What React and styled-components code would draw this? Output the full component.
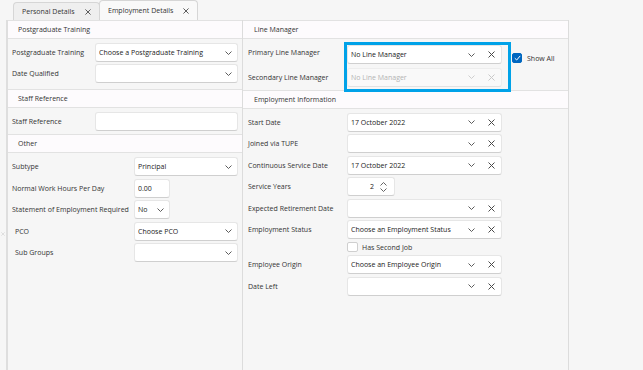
import React from "react";
import styled, { createGlobalStyle } from "styled-components";

const Global = createGlobalStyle`
  html, body { margin: 0; padding: 0; }
  body {
    background: #f6f6f6;
    font-family: "Open Sans", "Noto Sans", Arial, sans-serif;
    font-size: 7px;
    color: #333;
  }
`;

const Page = styled.div`
  display: flex;
  flex-direction: column;
  height: 370px;
  overflow: hidden;
`;

const TabBar = styled.div`
  display: flex;
  align-items: flex-end;
  height: 20px;
  padding-left: 13px;
  flex-shrink: 0;
`;

const Tab = styled.div`
  box-sizing: border-box;
  display: flex;
  align-items: center;
  justify-content: space-between;
  width: ${(p) => p.$w}px;
  height: ${(p) => (p.$active ? 20 : 18)}px;
  padding: 0 ${(p) => p.$pr}px 0 8px;
  background: ${(p) => (p.$active ? "#f9f9f9" : "#efefef")};
  border: 1px solid #d6d6d6;
  border-bottom: none;
  border-radius: 4px 4px 0 0;
  color: #333;
  & + & {
    margin-left: -1px;
  }
`;

const Main = styled.div`
  display: flex;
  flex: 1;
  min-height: 0;
`;

const Gutter = styled.div`
  width: 6px;
  flex-shrink: 0;
  box-sizing: border-box;
  padding: 212px 0 0 1px;
`;

const Column = styled.div`
  box-sizing: border-box;
  width: ${(p) => p.$w}px;
  flex-shrink: 0;
  display: flex;
  flex-direction: column;
  border-left: ${(p) => (p.$first ? "2px solid #dedede" : "none")};
  border-right: 1px solid #dcdcdc;
`;

const SectionHeader = styled.div`
  box-sizing: border-box;
  height: 19px;
  display: flex;
  align-items: center;
  padding-left: ${(p) => p.$indent}px;
  background: #fdfbfd;
  border-top: 1px solid #e2e2e2;
  border-bottom: 1px solid #e2e2e2;
  color: #333;
`;

const SectionBody = styled.div`
  display: flex;
  flex-direction: column;
  gap: ${(p) => p.$gap}px;
  padding: ${(p) => p.$pt}px 0 ${(p) => p.$pb}px ${(p) => p.$pl}px;
`;

const Row = styled.div`
  display: grid;
  grid-template-columns: ${(p) => p.$label}px auto;
  align-items: center;
`;

const Label = styled.span`
  padding-left: ${(p) => p.$indent || 0}px;
  white-space: nowrap;
  color: #333;
`;

const FieldBox = styled.div`
  box-sizing: border-box;
  width: ${(p) => p.$w}px;
  height: 19px;
  display: flex;
  align-items: center;
  background: ${(p) => (p.$disabled ? "#f9f9f9" : "#ffffff")};
  border: 1px solid ${(p) => (p.$disabled ? "#ededed" : "#e6e6e6")};
  border-bottom-color: ${(p) => (p.$disabled ? "#e2e2e2" : "#cfcfcf")};
  border-radius: 3px;
  padding-left: 3px;
  color: ${(p) => (p.$disabled ? "#b4b4b4" : "#222")};
`;

const Value = styled.span`
  flex: 1;
  white-space: nowrap;
  overflow: hidden;
  text-align: ${(p) => p.$align || "left"};
`;

const Icons = styled.div`
  display: flex;
  align-items: center;
  gap: 13px;
  padding-right: ${(p) => p.$pr}px;
  color: ${(p) => (p.$disabled ? "#c9c9c9" : "#4a4a4a")};
`;

const Spin = styled.div`
  display: flex;
  flex-direction: column;
  gap: 2px;
  padding: 0 7px 0 6px;
  color: #555;
`;

const LMBody = styled.div`
  display: grid;
  grid-template-columns: 99px 155px auto;
  grid-template-rows: 19px 19px;
  row-gap: 3.5px;
  align-items: center;
  padding: 6px 0 3px 5px;
`;

const Cell = styled.div`
  grid-column: ${(p) => p.$col};
  grid-row: ${(p) => p.$row};
  align-self: ${(p) => p.$align || "center"};
  margin-top: ${(p) => p.$mt || 0}px;
`;

const Highlight = styled.div`
  grid-column: 2;
  grid-row: 1 / 3;
  align-self: stretch;
  margin: -3px -9px -5px -3px;
  border: 3px solid #00a2e8;
  pointer-events: none;
  z-index: 3;
`;

const ShowAll = styled.label`
  grid-column: 3;
  grid-row: 1;
  align-self: end;
  display: flex;
  align-items: center;
  gap: 5px;
  margin: 0 0 1px 10px;
  color: #333;
  white-space: nowrap;
`;

const Check = styled.span`
  box-sizing: border-box;
  width: ${(p) => p.$w || 10}px;
  height: 10px;
  border-radius: 2px;
  display: flex;
  align-items: center;
  justify-content: center;
  background: ${(p) => (p.$checked ? "#0067c0" : "#ffffff")};
  border: 1px solid ${(p) => (p.$checked ? "#0067c0" : "#cfcfcf")};
`;

const CheckRow = styled.div`
  display: flex;
  align-items: center;
  gap: 4px;
  height: 11px;
  margin-left: 99px;
  color: #333;
`;

const Chevron = ({ up }) => (
  <svg width="7" height="4" viewBox="0 0 7 4" fill="none">
    <path
      d={up ? "M0.5 3.5 L3.5 0.5 L6.5 3.5" : "M0.5 0.5 L3.5 3.5 L6.5 0.5"}
      stroke="currentColor"
      strokeWidth="0.9"
    />
  </svg>
);

const Cross = ({ size = 7, w = 1 }) => (
  <svg width={size} height={size} viewBox="0 0 7 7" fill="none">
    <path d="M0.5 0.5 L6.5 6.5 M6.5 0.5 L0.5 6.5" stroke="currentColor" strokeWidth={w} />
  </svg>
);

const Field = ({ w, value, chevron, clear, disabled }) => (
  <FieldBox $w={w} $disabled={disabled}>
    <Value>{value}</Value>
    {(chevron || clear) && (
      <Icons $pr={clear ? 6 : 5} $disabled={disabled}>
        {chevron && <Chevron />}
        {clear && <Cross />}
      </Icons>
    )}
  </FieldBox>
);

const TabX = styled.span`
  display: flex;
  color: #444;
`;

const GutterMark = styled.span`
  display: flex;
  color: #c4c4c4;
`;

const leftRows1 = [
  { label: "Postgraduate Training", value: "Choose a Postgraduate Training" },
  { label: "Date Qualified", value: "" },
];

const otherRows = [
  { label: "Subtype", value: "Principal", w: 104, chevron: true },
  { label: "Normal Work Hours Per Day", value: "0.00", w: 36 },
  { label: "Statement of Employment Required", value: "No", w: 36, chevron: true },
  { label: "PCO", value: "Choose PCO", w: 104, chevron: true, indent: 3 },
  { label: "Sub Groups", value: "", w: 104, chevron: true, indent: 3 },
];

const empRowsA = [
  { label: "Start Date", value: "17 October 2022" },
  { label: "Joined via TUPE", value: "" },
  { label: "Continuous Service Date", value: "17 October 2022" },
];
const empRowsB = [
  { label: "Expected Retirement Date", value: "" },
  { label: "Employment Status", value: "Choose an Employment Status" },
];
const empRowsC = [
  { label: "Employee Origin", value: "Choose an Employee Origin" },
  { label: "Date Left", value: "" },
];

export default function App() {
  return (
    <Page>
      <Global />
      <TabBar>
        <Tab $w={87} $pr={8}>
          <span>Personal Details</span>
          <TabX>
            <Cross size={6} w={1} />
          </TabX>
        </Tab>
        <Tab $w={99} $active $pr={8}>
          <span>Employment Details</span>
          <TabX>
            <Cross size={6} w={1} />
          </TabX>
        </Tab>
      </TabBar>
      <Main>
        <Gutter>
          <GutterMark>
            <Cross size={4} w={0.8} />
          </GutterMark>
        </Gutter>
        <Column $w={237} $first>
          <SectionHeader $indent={10}>Postgraduate Training</SectionHeader>
          <SectionBody $pt={4} $pb={6} $pl={4} $gap={2}>
            {leftRows1.map((r) => (
              <Row key={r.label} $label={83}>
                <Label>{r.label}</Label>
                <Field w={143} value={r.value} chevron />
              </Row>
            ))}
          </SectionBody>
          <SectionHeader $indent={10}>Staff Reference</SectionHeader>
          <SectionBody $pt={4} $pb={3} $pl={4} $gap={2}>
            <Row $label={83}>
              <Label>Staff Reference</Label>
              <Field w={143} value="" />
            </Row>
          </SectionBody>
          <SectionHeader $indent={10}>Other</SectionHeader>
          <SectionBody $pt={4} $pb={0} $pl={4} $gap={2.5}>
            {otherRows.map((r) => (
              <Row key={r.label} $label={122}>
                <Label $indent={r.indent}>{r.label}</Label>
                <Field w={r.w} value={r.value} chevron={r.chevron} />
              </Row>
            ))}
          </SectionBody>
        </Column>
        <Column $w={326}>
          <SectionHeader $indent={11}>Line Manager</SectionHeader>
          <LMBody>
            <Cell $col={1} $row={1} $mt={-5}>
              <Label>Primary Line Manager</Label>
            </Cell>
            <Cell $col={2} $row={1}>
              <Field w={155} value="No Line Manager" chevron clear />
            </Cell>
            <Cell $col={1} $row={2}>
              <Label>Secondary Line Manager</Label>
            </Cell>
            <Cell $col={2} $row={2}>
              <Field w={155} value="No Line Manager" chevron clear disabled />
            </Cell>
            <Highlight />
            <ShowAll>
              <Check $checked>
                <svg width="7" height="6" viewBox="0 0 7 6" fill="none">
                  <path d="M0.8 3.2 L2.7 5 L6.2 0.9" stroke="#fff" strokeWidth="1" />
                </svg>
              </Check>
              <span>Show All</span>
            </ShowAll>
          </LMBody>
          <SectionHeader $indent={11}>Employment Information</SectionHeader>
          <SectionBody $pt={4} $pb={0} $pl={5} $gap={2.5}>
            {empRowsA.map((r) => (
              <Row key={r.label} $label={99}>
                <Label>{r.label}</Label>
                <Field w={155} value={r.value} chevron clear />
              </Row>
            ))}
            <Row $label={99}>
              <Label>Service Years</Label>
              <FieldBox $w={48}>
                <Value $align="right">2</Value>
                <Spin>
                  <Chevron up />
                  <Chevron />
                </Spin>
              </FieldBox>
            </Row>
            {empRowsB.map((r) => (
              <Row key={r.label} $label={99}>
                <Label>{r.label}</Label>
                <Field w={155} value={r.value} chevron clear />
              </Row>
            ))}
            <CheckRow>
              <Check $w={11} />
              <span>Has Second Job</span>
            </CheckRow>
            {empRowsC.map((r) => (
              <Row key={r.label} $label={99}>
                <Label>{r.label}</Label>
                <Field w={155} value={r.value} chevron clear />
              </Row>
            ))}
          </SectionBody>
        </Column>
      </Main>
    </Page>
  );
}
